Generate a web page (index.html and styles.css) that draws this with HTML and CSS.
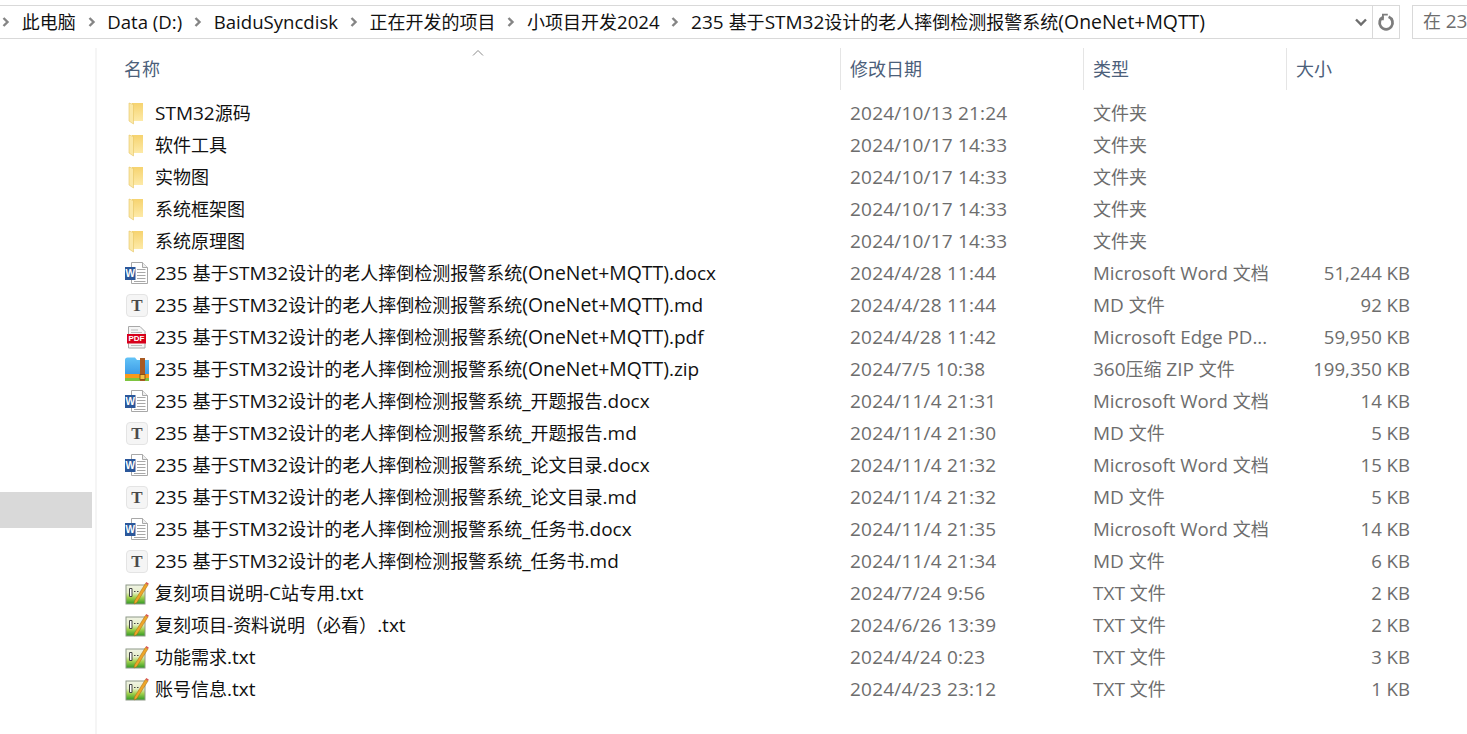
FILE: index.html
```html
<!DOCTYPE html>
<html>
<head>
  <meta charset="utf-8">
  <title>235 基于STM32设计的老人摔倒检测报警系统(OneNet+MQTT)</title>
  <link rel="stylesheet" href="styles.css">
</head>
<body>
  <svg class="defs" width="0" height="0">
    <defs>
      <linearGradient id="g-folder" x1="0" y1="0" x2="0" y2="1">
        <stop offset="0" stop-color="#f6d36f"/>
        <stop offset="1" stop-color="#fdeaa8"/>
      </linearGradient>
      <linearGradient id="g-zip" x1="0" y1="0" x2="0" y2="1">
        <stop offset="0" stop-color="#62c3f7"/>
        <stop offset="1" stop-color="#3b9ae6"/>
      </linearGradient>
      <linearGradient id="g-txt" x1="0" y1="0" x2="0" y2="1">
        <stop offset="0" stop-color="#f1f3e6"/>
        <stop offset=".4" stop-color="#e6efc8"/>
        <stop offset=".65" stop-color="#a5d24f"/>
        <stop offset="1" stop-color="#2f9a23"/>
      </linearGradient>
    </defs>
    <symbol id="i-sep" viewBox="0 0 8 10">
      <path d="M1.500 1l4 4-4 4" fill="none" stroke="#858585" stroke-width="2.400"/>
    </symbol>
    <symbol id="i-folder" viewBox="0 0 24 24">
      <path d="M7 2h11v18H7z" fill="url(#g-folder)"/>
      <path d="M4 2l4.500 1.500V23L4 20z" fill="#fbe8a6" stroke="#e6c461" stroke-width=".6"/>
    </symbol>
    <symbol id="i-word" viewBox="0 0 24 24">
      <path d="M6.500 1.500h11l5 5v16h-16z" fill="#fff" stroke="#a8a8a8"/>
      <path d="M17.500 1.500v5h5" fill="#eee" stroke="#a8a8a8"/>
      <path d="M12 8.500h8.500M12 11.500h8.500M12 14.500h8.500M12 17.500h8.500M9 20.500h11.500" stroke="#a8a8a8"/>
      <rect x="0" y="6" width="10.500" height="13" fill="#2b579a"/>
    </symbol>
    <symbol id="i-md" viewBox="0 0 24 24">
      <rect x="1.500" y="1.500" width="21" height="22" rx="3.500" fill="#f5f5f5" stroke="#e4e4e4"/>
    </symbol>
    <symbol id="i-pdf" viewBox="0 0 24 24">
      <path d="M3.500 1.500h11.500l5 5v16.500H3.500z" fill="#f5f5f5" stroke="#a8a8a8"/>
      <path d="M6 5h7M6 7.500h11M6 20.500h11" stroke="#bbb"/>
      <rect x="2" y="9" width="19" height="9.500" fill="#d7001b"/>
    </symbol>
    <symbol id="i-zip" viewBox="0 0 24 24">
      <path d="M0 3a2.500 2.500 0 0 1 2.500-2.500h7.500l2 2.500h12v15H0z" fill="url(#g-zip)"/>
      <path d="M0 17h24v4H0z" fill="#f89a1c"/>
      <path d="M0 21h24v3H0z" fill="#7ec440"/>
      <rect x="15" y="1" width="5" height="23" fill="#a85a22"/>
      <rect x="15" y="17.500" width="5" height="5" fill="#f4c242" stroke="#7a4312" stroke-width=".8"/>
    </symbol>
    <symbol id="i-txt" viewBox="0 0 24 24">
      <rect x="1" y="4" width="19" height="19" fill="url(#g-txt)" stroke="#8e9a88"/>
      <path d="M4.500 7.500v8h2.500v-8zM9 10.500h1.500M12 10.500h1.500" stroke="#444" fill="#fff"/>
      <path d="M9.500 20l-.5 3 2.800-1.400L23 4 20.500 2.300z" fill="#eda52a" stroke="#a66a12" stroke-width=".5"/>
      <path d="M20.500 2.300l.9-1.300 2.500 1.700-.9 1.300z" fill="#d9534f"/>
    </symbol>
  </svg>

  <div class="toolbar">
    <div class="address">
      <div class="crumbs">
        <svg class="sep"><use href="#i-sep"/></svg><span>此电脑</span>
        <svg class="sep"><use href="#i-sep"/></svg><span class="en small">Data (D:)</span>
        <svg class="sep"><use href="#i-sep"/></svg><span class="en small">BaiduSyncdisk</span>
        <svg class="sep"><use href="#i-sep"/></svg><span>正在开发的项目</span>
        <svg class="sep"><use href="#i-sep"/></svg><span>小项目开发<span class="en small">2024</span></span>
        <svg class="sep"><use href="#i-sep"/></svg><span><span class="en">235 </span>基于<span class="en">STM32</span>设计的老人摔倒检测报警系统<span class="en long">(OneNet+MQTT)</span></span>
      </div>
      <svg class="chevron" width="14" height="10" viewBox="0 0 14 10"><path d="M2 2.500l5 5 5-5" fill="none" stroke="#6d6d6d" stroke-width="2.400"/></svg>
      <div class="refresh">
        <svg width="18" height="18" viewBox="0 0 18 18"><path d="M11.600 3.800a6.500 6.500 0 1 1-5 0" fill="none" stroke="#7d7d7d" stroke-width="2.800"/><path d="M5 .8v6.400h1.800V2.600h4V.8z" fill="#7d7d7d"/></svg>
      </div>
    </div>
    <div class="search">在 <span class="en">23</span></div>
  </div>

  <div class="main">
    <div class="sidebar">
      <div class="nav-selected"></div>
    </div>
    <div class="content">
      <div class="sort-caret"><svg width="12" height="6" viewBox="0 0 12 6"><path d="M1 5.500l5-5 5 5" fill="none" stroke="#8a8a8a"/></svg></div>
      <div class="row header">
        <div class="cell">名称</div>
        <div class="cell col">修改日期</div>
        <div class="cell col">类型</div>
        <div class="cell col">大小</div>
      </div>
      <div class="list">
        <div class="row"><div class="cell name"><span class="ic"><svg class="icon"><use href="#i-folder"/></svg></span><span><span class="en">STM32</span>源码</span></div><div class="cell date">2024/10/13 21:24</div><div class="cell">文件夹</div><div class="cell size"></div></div>
        <div class="row"><div class="cell name"><span class="ic"><svg class="icon"><use href="#i-folder"/></svg></span>软件工具</div><div class="cell date">2024/10/17 14:33</div><div class="cell">文件夹</div><div class="cell size"></div></div>
        <div class="row"><div class="cell name"><span class="ic"><svg class="icon"><use href="#i-folder"/></svg></span>实物图</div><div class="cell date">2024/10/17 14:33</div><div class="cell">文件夹</div><div class="cell size"></div></div>
        <div class="row"><div class="cell name"><span class="ic"><svg class="icon"><use href="#i-folder"/></svg></span>系统框架图</div><div class="cell date">2024/10/17 14:33</div><div class="cell">文件夹</div><div class="cell size"></div></div>
        <div class="row"><div class="cell name"><span class="ic"><svg class="icon"><use href="#i-folder"/></svg></span>系统原理图</div><div class="cell date">2024/10/17 14:33</div><div class="cell">文件夹</div><div class="cell size"></div></div>
        <div class="row"><div class="cell name"><span class="ic"><svg class="icon"><use href="#i-word"/></svg><span class="mark mark-w">W</span></span><span><span class="en">235 </span>基于<span class="en">STM32</span>设计的老人摔倒检测报警系统<span class="en long">(OneNet+MQTT)</span><span class="en">.docx</span></span></div><div class="cell date">2024/4/28 11:44</div><div class="cell"><span class="en ms">Microsoft Word </span>文档</div><div class="cell size">51,244 KB</div></div>
        <div class="row"><div class="cell name"><span class="ic"><svg class="icon"><use href="#i-md"/></svg><span class="mark mark-t">T</span></span><span><span class="en">235 </span>基于<span class="en">STM32</span>设计的老人摔倒检测报警系统<span class="en long">(OneNet+MQTT)</span><span class="en">.md</span></span></div><div class="cell date">2024/4/28 11:44</div><div class="cell"><span class="en">MD </span>文件</div><div class="cell size">92 KB</div></div>
        <div class="row"><div class="cell name"><span class="ic"><svg class="icon"><use href="#i-pdf"/></svg><span class="mark mark-pdf">PDF</span></span><span><span class="en">235 </span>基于<span class="en">STM32</span>设计的老人摔倒检测报警系统<span class="en long">(OneNet+MQTT)</span><span class="en">.pdf</span></span></div><div class="cell date">2024/4/28 11:42</div><div class="cell"><span class="en ms">Microsoft Edge PD...</span></div><div class="cell size">59,950 KB</div></div>
        <div class="row"><div class="cell name"><span class="ic"><svg class="icon"><use href="#i-zip"/></svg></span><span><span class="en">235 </span>基于<span class="en">STM32</span>设计的老人摔倒检测报警系统<span class="en long">(OneNet+MQTT)</span><span class="en">.zip</span></span></div><div class="cell date">2024/7/5 10:38</div><div class="cell"><span class="en">360</span>压缩 <span class="en">ZIP </span>文件</div><div class="cell size">199,350 KB</div></div>
        <div class="row"><div class="cell name"><span class="ic"><svg class="icon"><use href="#i-word"/></svg><span class="mark mark-w">W</span></span><span><span class="en">235 </span>基于<span class="en">STM32</span>设计的老人摔倒检测报警系统<span class="en">_</span>开题报告<span class="en">.docx</span></span></div><div class="cell date">2024/11/4 21:31</div><div class="cell"><span class="en ms">Microsoft Word </span>文档</div><div class="cell size">14 KB</div></div>
        <div class="row"><div class="cell name"><span class="ic"><svg class="icon"><use href="#i-md"/></svg><span class="mark mark-t">T</span></span><span><span class="en">235 </span>基于<span class="en">STM32</span>设计的老人摔倒检测报警系统<span class="en">_</span>开题报告<span class="en">.md</span></span></div><div class="cell date">2024/11/4 21:30</div><div class="cell"><span class="en">MD </span>文件</div><div class="cell size">5 KB</div></div>
        <div class="row"><div class="cell name"><span class="ic"><svg class="icon"><use href="#i-word"/></svg><span class="mark mark-w">W</span></span><span><span class="en">235 </span>基于<span class="en">STM32</span>设计的老人摔倒检测报警系统<span class="en">_</span>论文目录<span class="en">.docx</span></span></div><div class="cell date">2024/11/4 21:32</div><div class="cell"><span class="en ms">Microsoft Word </span>文档</div><div class="cell size">15 KB</div></div>
        <div class="row"><div class="cell name"><span class="ic"><svg class="icon"><use href="#i-md"/></svg><span class="mark mark-t">T</span></span><span><span class="en">235 </span>基于<span class="en">STM32</span>设计的老人摔倒检测报警系统<span class="en">_</span>论文目录<span class="en">.md</span></span></div><div class="cell date">2024/11/4 21:32</div><div class="cell"><span class="en">MD </span>文件</div><div class="cell size">5 KB</div></div>
        <div class="row"><div class="cell name"><span class="ic"><svg class="icon"><use href="#i-word"/></svg><span class="mark mark-w">W</span></span><span><span class="en">235 </span>基于<span class="en">STM32</span>设计的老人摔倒检测报警系统<span class="en">_</span>任务书<span class="en">.docx</span></span></div><div class="cell date">2024/11/4 21:35</div><div class="cell"><span class="en ms">Microsoft Word </span>文档</div><div class="cell size">14 KB</div></div>
        <div class="row"><div class="cell name"><span class="ic"><svg class="icon"><use href="#i-md"/></svg><span class="mark mark-t">T</span></span><span><span class="en">235 </span>基于<span class="en">STM32</span>设计的老人摔倒检测报警系统<span class="en">_</span>任务书<span class="en">.md</span></span></div><div class="cell date">2024/11/4 21:34</div><div class="cell"><span class="en">MD </span>文件</div><div class="cell size">6 KB</div></div>
        <div class="row"><div class="cell name"><span class="ic"><svg class="icon"><use href="#i-txt"/></svg></span><span>复刻项目说明<span class="en">-C</span>站专用<span class="en">.txt</span></span></div><div class="cell date">2024/7/24 9:56</div><div class="cell"><span class="en">TXT </span>文件</div><div class="cell size">2 KB</div></div>
        <div class="row"><div class="cell name"><span class="ic"><svg class="icon"><use href="#i-txt"/></svg></span><span>复刻项目<span class="en">-</span>资料说明（必看）<span class="en">.txt</span></span></div><div class="cell date">2024/6/26 13:39</div><div class="cell"><span class="en">TXT </span>文件</div><div class="cell size">2 KB</div></div>
        <div class="row"><div class="cell name"><span class="ic"><svg class="icon"><use href="#i-txt"/></svg></span><span>功能需求<span class="en">.txt</span></span></div><div class="cell date">2024/4/24 0:23</div><div class="cell"><span class="en">TXT </span>文件</div><div class="cell size">3 KB</div></div>
        <div class="row"><div class="cell name"><span class="ic"><svg class="icon"><use href="#i-txt"/></svg></span><span>账号信息<span class="en">.txt</span></span></div><div class="cell date">2024/4/23 23:12</div><div class="cell"><span class="en">TXT </span>文件</div><div class="cell size">1 KB</div></div>
      </div>
    </div>
  </div>
</body>
</html>
```

FILE: styles.css
```css
html, body {
  margin: 0;
  padding: 0;
  height: 734px;
  overflow: hidden;
  background-color: #fff;
}

body {
  font-family: "Open Sans", "Noto Sans CJK SC", sans-serif;
  font-size: 18px;
  color: #111;
}

/* latin runs sit a bit larger than the cjk ones */
.en {
  font-size: 19px;
}

.en.small {
  font-size: 18.600px;
}

.en.ms {
  font-size: 18.700px;
}

.en.long {
  font-size: 19.400px;
}

.defs {
  display: block;
  height: 0;
}

.toolbar {
  display: flex;
  gap: 12px;
  height: 34px;
  margin-top: 5px;
}

.address {
  display: flex;
  align-items: center;
  width: 1400px;
  box-sizing: border-box;
  border: 1px solid #d9d9d9;
  border-left: none;
}

.crumbs {
  display: flex;
  align-items: center;
  flex: 1;
  gap: 11.750px;
  padding-left: 2px;
  line-height: 30px;
  white-space: nowrap;
  overflow: hidden;
}

.sep {
  width: 8px;
  height: 10px;
  flex: none;
}

.chevron {
  margin-right: 4px;
}

.refresh {
  display: flex;
  align-items: center;
  justify-content: center;
  width: 26px;
  height: 100%;
  border-left: 1px solid #d9d9d9;
}

.search {
  flex: 1;
  box-sizing: border-box;
  border: 1px solid #d9d9d9;
  border-right: none;
  padding-left: 10px;
  line-height: 30px;
  color: #6d6d6d;
  white-space: nowrap;
  overflow: hidden;
}

.main {
  display: flex;
  margin-top: 9px;
}

.sidebar {
  width: 95px;
  height: 242px;
  border-right: 2px solid #f5f5f5;
  padding-top: 444px;
}

.nav-selected {
  width: 92px;
  height: 36px;
  background-color: #d9d9d9;
}

.content {
  position: relative;
  flex: 1;
}

.sort-caret {
  position: absolute;
  left: 375px;
  top: 1px;
  line-height: 0;
}

.row {
  display: grid;
  grid-template-columns: 743px 243px 203px 124px;
  height: 32px;
  line-height: 32px;
  white-space: nowrap;
}

.header {
  height: 40px;
  line-height: 42px;
  margin-bottom: 9px;
  color: #4c607a;
}

.header .cell {
  padding-left: 27px;
}

.header .col {
  padding-left: 9px;
  border-left: 1px solid #e5e5e5;
}

.list .cell {
  padding-left: 10px;
  color: #6d6d6d;
}

.list .name {
  display: flex;
  align-items: center;
  padding-left: 28px;
  color: #111;
}

.list .date {
  font-size: 19px;
  letter-spacing: .2px;
}

.list .size {
  padding-left: 0;
  font-size: 18.600px;
  text-align: right;
}

.ic {
  position: relative;
  display: flex;
  flex: none;
  margin-right: 6px;
}

.icon {
  width: 24px;
  height: 24px;
}

/* letter marks laid over the icon pictures */
.mark {
  position: absolute;
  text-align: center;
}

.mark-w {
  left: 0;
  top: 6px;
  width: 10.500px;
  font: bold 10px/13px "Liberation Sans", sans-serif;
  color: #fff;
}

.mark-t {
  left: 1px;
  top: 2px;
  width: 22px;
  font: bold 17px/22px "Liberation Serif", serif;
  color: #4a4a4a;
}

.mark-pdf {
  left: 2px;
  top: 9px;
  width: 19px;
  font: bold 8px/10px "Liberation Sans", sans-serif;
  color: #fff;
}
```
